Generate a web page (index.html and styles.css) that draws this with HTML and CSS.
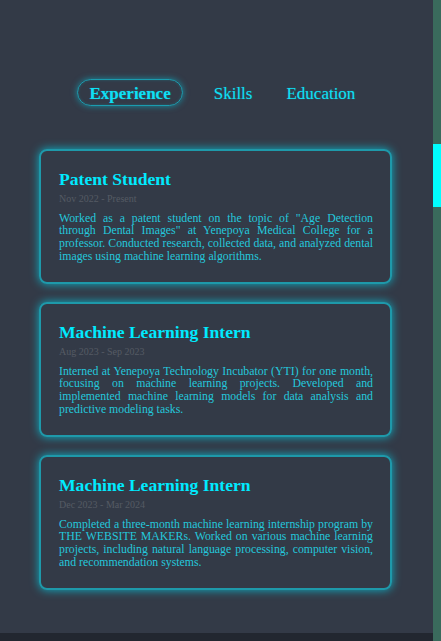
FILE: index.html
```html
<!DOCTYPE html>
<html lang="en">
<head>
<meta charset="utf-8">
<title>Experience</title>
<link rel="stylesheet" href="styles.css">
</head>
<body>
<div class="page">
  <main class="content">
    <nav class="tabs">
      <button class="tab active">Experience</button>
      <button class="tab tab-skills">Skills</button>
      <button class="tab tab-edu">Education</button>
    </nav>
    <section class="cards">
      <article class="card">
        <h2 class="card-title">Patent Student</h2>
        <p class="card-date">Nov 2022 - Present</p>
        <p class="card-text">Worked as a patent student on the topic of "Age Detection through Dental Images" at Yenepoya Medical College for a professor. Conducted research, collected data, and analyzed dental images using machine learning algorithms.</p>
      </article>
      <article class="card">
        <h2 class="card-title">Machine Learning Intern</h2>
        <p class="card-date">Aug 2023 - Sep 2023</p>
        <p class="card-text">Interned at Yenepoya Technology Incubator (YTI) for one month, focusing on machine learning projects. Developed and implemented machine learning models for data analysis and predictive modeling tasks.</p>
      </article>
      <article class="card">
        <h2 class="card-title">Machine Learning Intern</h2>
        <p class="card-date">Dec 2023 - Mar 2024</p>
        <p class="card-text">Completed a three-month machine learning internship program by THE WEBSITE MAKERs. Worked on various machine learning projects, including natural language processing, computer vision, and recommendation systems.</p>
      </article>
    </section>
  </main>
  <div class="hbar"></div>
</div>
<div class="vbar"><div class="thumb"></div></div>
</body>
</html>
```
FILE: styles.css
```css
html, body {
  margin: 0;
  padding: 0;
  height: 100%;
}
body {
  display: flex;
  height: 641px;
  overflow: hidden;
  background: #333a47;
  font-family: "Liberation Serif", "Times New Roman", serif;
}
.page {
  flex: 1;
  display: flex;
  flex-direction: column;
  min-width: 0;
}
.content {
  flex: 1;
  padding-top: 79px;
}
.hbar {
  height: 8px;
  background: #222730;
}
.vbar {
  width: 8px;
  background: #3a6a5c;
}
.thumb {
  margin-top: 144px;
  height: 63px;
  background: #00ffff;
}
.tabs {
  display: flex;
  align-items: center;
  padding-left: 77px;
  height: 27px;
}
.tab {
  box-sizing: border-box;
  font-family: "Liberation Serif", "Times New Roman", serif;
  font-size: 17px;
  color: #0ee0f5;
  background: transparent;
  border: 1.5px solid transparent;
  border-radius: 14px;
  height: 27px;
  padding: 1px 11.5px 0;
  line-height: 1;
  cursor: pointer;
  text-shadow: 0 0 1.5px rgba(0, 225, 250, 0.35);
}
.tab.active {
  font-weight: bold;
  border-color: rgba(20, 190, 210, 0.75);
  box-shadow: 0 0 6px rgba(0, 210, 235, 0.55), inset 0 0 3px rgba(0, 210, 235, 0.25);
}
.tab-skills {
  margin-left: 18px;
}
.tab-edu {
  margin-left: 9px;
}
.cards {
  margin: 43px 0 0 39px;
  width: 353px;
  display: flex;
  flex-direction: column;
  gap: 18px;
}
.card {
  box-sizing: border-box;
  height: 135px;
  border: 2px solid rgba(20, 205, 225, 0.65);
  border-radius: 8px;
  box-shadow: 0 0 10px rgba(0, 215, 240, 0.75);
  padding: 18px 17px 0 18px;
}
.card-title {
  margin: 0;
  font-size: 17.6px;
  font-weight: bold;
  color: #00eaff;
  line-height: 20px;
}
.card-date {
  margin: 4px 0 0;
  font-size: 10px;
  line-height: 11.5px;
  color: #555b64;
}
.card-text {
  margin: 7px 0 0;
  font-size: 11.8px;
  line-height: 12.7px;
  color: #24c8dc;
  text-align: justify;
}
```
